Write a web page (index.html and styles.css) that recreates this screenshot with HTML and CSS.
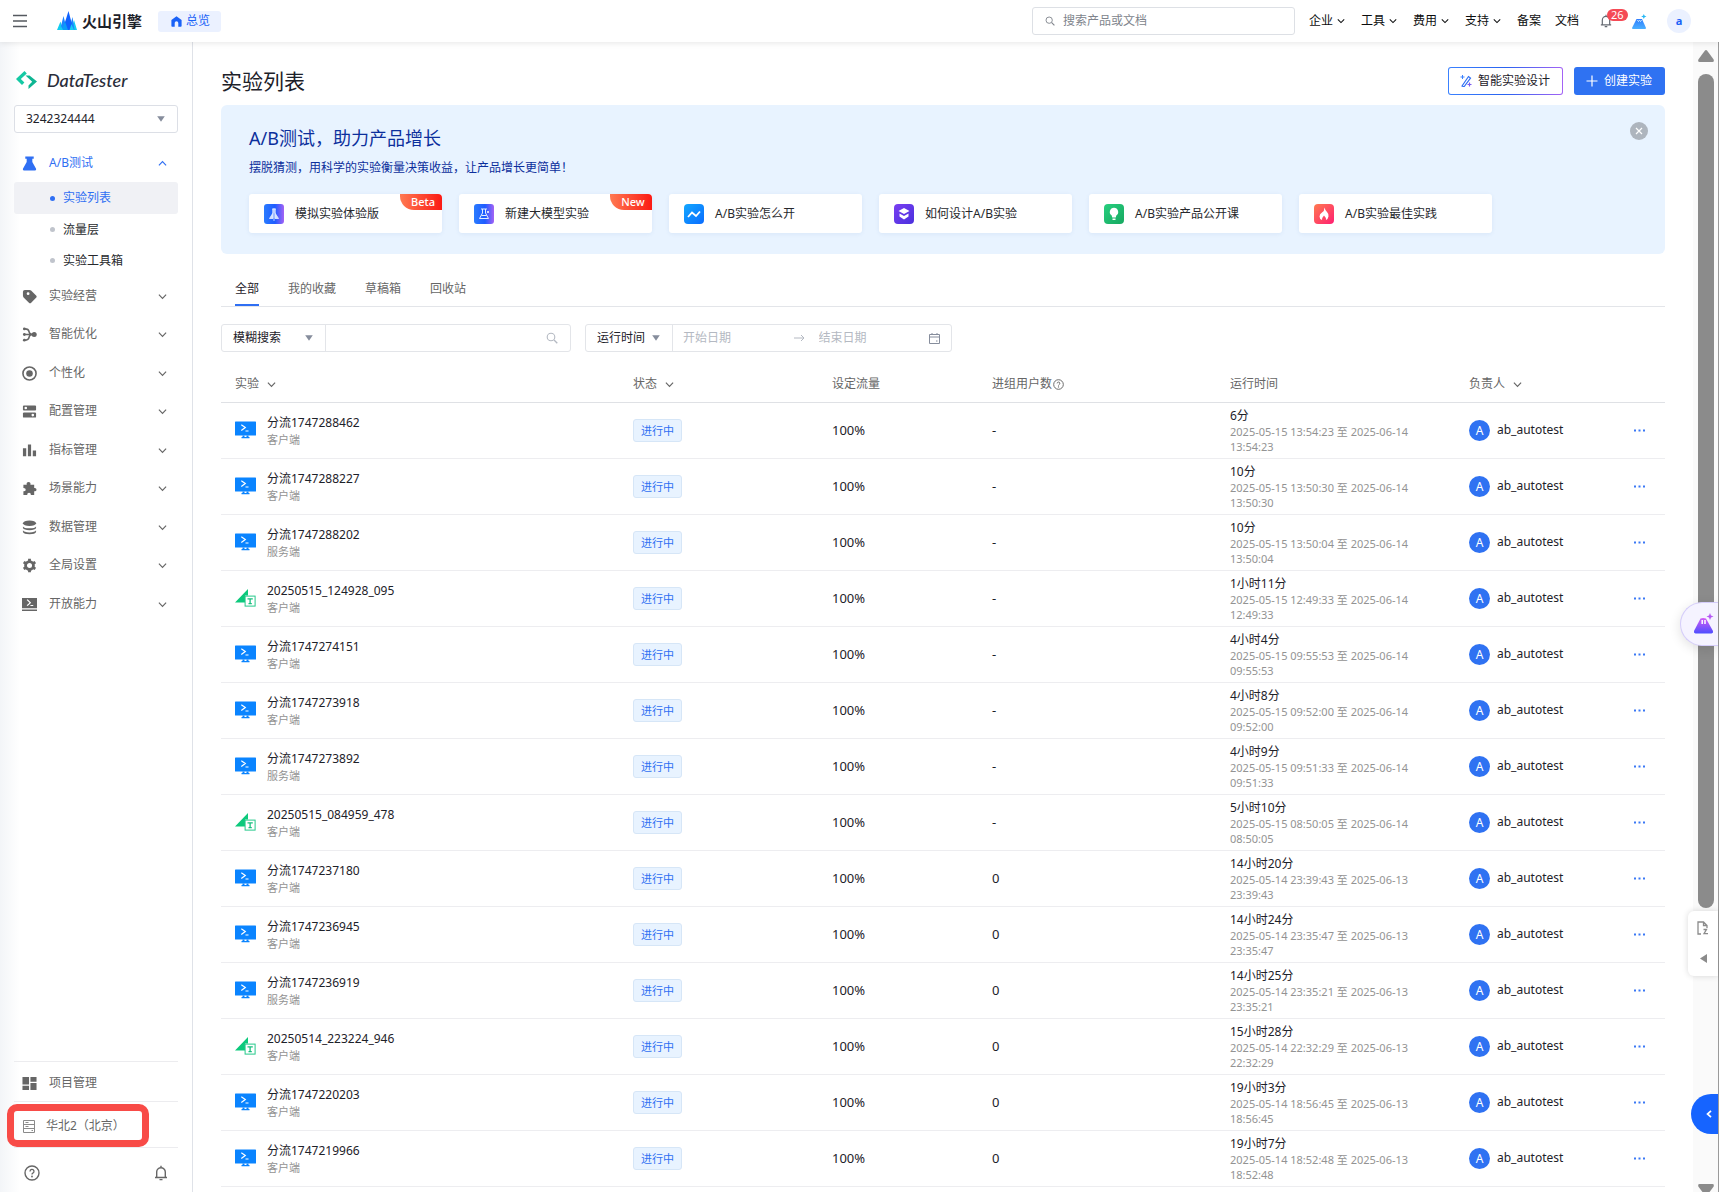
FILE: index.html
```html
<!DOCTYPE html>
<html lang="zh-CN">
<head>
<meta charset="utf-8">
<title>实验列表 - DataTester</title>
<link rel="stylesheet" href="styles.css">
</head>
<body>
<svg class="sprite" aria-hidden="true">
  <defs>
    <linearGradient id="g-lab" x1="0" x2="1"><stop offset="0" stop-color="#2a7bff"/><stop offset=".55" stop-color="#1f5cff"/><stop offset="1" stop-color="#a463f5"/></linearGradient>
    <linearGradient id="g-sky" x1="0" y1="0" x2="1" y2="1"><stop offset="0" stop-color="#12a8ff"/><stop offset="1" stop-color="#0a6cff"/></linearGradient>
    <linearGradient id="g-violet" x1="0" y1="0" x2="1" y2="1"><stop offset="0" stop-color="#7a3ff2"/><stop offset="1" stop-color="#4a30dd"/></linearGradient>
    <linearGradient id="g-green" x1="0" y1="0" x2="1" y2="1"><stop offset="0" stop-color="#27cf7f"/><stop offset="1" stop-color="#17a860"/></linearGradient>
    <linearGradient id="g-fire" x1="0" y1="0" x2="1" y2="1"><stop offset="0" stop-color="#ff7a50"/><stop offset="1" stop-color="#ff1f72"/></linearGradient>
    <linearGradient id="g-ai" x1="0" y1="0" x2="0" y2="1"><stop offset="0" stop-color="#d45cf5"/><stop offset="1" stop-color="#4d4dff"/></linearGradient>
    <linearGradient id="g-hill" x1="0" y1="0" x2="0" y2="1"><stop offset="0" stop-color="#2f7dff"/><stop offset="1" stop-color="#4bb0ff"/></linearGradient>
  </defs>
  <symbol id="down" viewBox="0 0 10 10"><path d="M1 3l4 4 4-4" fill="none" stroke="currentColor" stroke-width="1.3"/></symbol>
  <symbol id="up" viewBox="0 0 10 10"><path d="M1 7l4-4 4 4" fill="none" stroke="currentColor" stroke-width="1.3"/></symbol>
  <symbol id="caret" viewBox="0 0 8 6"><path d="M.2.3h7.600L4 5.800z" fill="currentColor"/></symbol>
  <symbol id="search" viewBox="0 0 12 12"><circle cx="5" cy="5" r="3.8" fill="none" stroke="currentColor" stroke-width="1.1"/><path d="M8 8l3.3 3.3" stroke="currentColor" stroke-width="1.3"/></symbol>
  <symbol id="help" viewBox="0 0 16 16"><circle cx="8" cy="8" r="7" fill="none" stroke="currentColor" stroke-width="1.4"/><path d="M6 6.4a2 2 0 1 1 2.9 1.8c-.6.3-.9.6-.9 1.3" fill="none" stroke="currentColor" stroke-width="1.3"/><circle cx="8" cy="11.5" r=".9" fill="currentColor"/></symbol>
  <symbol id="bell" viewBox="0 0 14 16"><path d="M1 12.5h12M2.700 12.5V7a4.3 4.3 0 0 1 8.600 0v5.500M7 2.700V.8M5.500 14.600h3" fill="none" stroke="currentColor" stroke-width="1.400"/></symbol>
  <symbol id="screen" viewBox="0 0 21 18"><rect width="21" height="14" y=".5" rx=".6" fill="#0a84ff"/><path d="M7.500 14.500h2V16h-2zM11.500 14.500h2V16h-2zM6.500 16h8v1.200h-8z" fill="#0a84ff"/><path d="M6.300 3.800l4 2.700-4 3M10.500 10h3" fill="none" stroke="#fff" stroke-width="1.200"/></symbol>
  <symbol id="tri" viewBox="0 0 21 18"><path d="M0 13.500L13 0v6.500H10v7z" fill="#0cc97c"/><rect x="10.100" y="7.100" width="10" height="10" fill="#fff" stroke="#25c98a"/><path d="M12.500 9.800h5.300M15.100 9.800v5M13.500 14.700h3.300" stroke="#19bf7f" stroke-width="1.300"/></symbol>
  <symbol id="dots" viewBox="0 0 11 3"><path d="M0 .5h2v2H0zM4.500.5h2v2h-2zM9 .5h2v2H9z" fill="#3a78f5"/></symbol>
</svg>

<header class="topbar">
  <button class="icon-btn" aria-label="菜单"><svg width="14" height="14" viewBox="0 0 14 14"><path d="M0 1.500h14M0 7h14M0 12.500h14" stroke="#55595f" stroke-width="1.300"/></svg></button>
  <a class="brand" href="#">
    <svg width="20" height="20" viewBox="0 0 20 20"><path d="M0 19L3.500 10.500 6 19zM20 19L17 9l-3 10z" fill="#12cdf0"/><path d="M3 19L6.500 5l3.500 14zM17.500 19L15.500 6 12 19z" fill="#1a85ff"/><path d="M5.500 19L11.500 0l5 19z" fill="#0f62fe"/><path d="M4.500 19L8 10.500 11 19z" fill="#0a9cf8"/><path d="M12.500 19l2-6 2.500 6zM2 19l2-4 2 4z" fill="#16cdf2"/></svg>
    <span>火山引擎</span>
  </a>
  <a class="overview" href="#"><svg width="11" height="11" viewBox="0 0 11 11"><path d="M5.500.3L10.600 4v6q0 .8-.8.8H7.300V7a1.800 1.800 0 0 0-3.600 0v3.800H1.200Q.4 10.800.4 10V4z" fill="#1a62f7"/></svg>总览</a>
  <label class="site-search"><svg width="10" height="10"><use href="#search"/></svg><input type="text" placeholder="搜索产品或文档" aria-label="搜索产品或文档"></label>
  <nav class="topnav">
    <button>企业<svg width="8" height="8"><use href="#down"/></svg></button>
    <button>工具<svg width="8" height="8"><use href="#down"/></svg></button>
    <button>费用<svg width="8" height="8"><use href="#down"/></svg></button>
    <button>支持<svg width="8" height="8"><use href="#down"/></svg></button>
    <a href="#">备案</a>
    <a href="#">文档</a>
  </nav>
  <button class="icon-btn notice" aria-label="通知"><svg width="12" height="14"><use href="#bell"/></svg><span class="count">26</span></button>
  <button class="icon-btn assistant" aria-label="助手"><svg width="15" height="15" viewBox="0 0 15 15"><path d="M0 14L4.500 5h5.500l4 9q0 1-1 1H1q-1 0-1-1z" fill="url(#g-hill)"/><path d="M5.500 6l1 1.500 1-1 1 1L9.500 6" stroke="#d7f3ff" fill="none"/><path d="M11.800 0l.8 1.700 1.900.8-1.900.8-.8 1.700-.8-1.700-1.900-.8 1.900-.8z" fill="#28b8f5"/></svg></button>
  <button class="user" aria-label="账号">a</button>
</header>

<div class="body">
  <aside class="side">
    <div class="product">
      <svg width="21" height="18" viewBox="0 0 21 18"><path d="M8.500 0L0 8l6 6 2.400-2.400L4.800 8l6-5.500z" fill="#14c9a4"/><path d="M9.500 4.500h4L21 10.500 12.500 18v-3.500l3.700-3.800z" fill="#0eb592"/></svg>
      <span>DataTester</span>
    </div>
    <div class="select project"><select aria-label="项目"><option>3242324444</option></select><svg width="8" height="6"><use href="#caret"/></svg></div>
    <nav class="menu">
      <a class="item active" href="#"><svg class="ico" viewBox="0 0 16 16"><path d="M3.500.5h9V3H11v3.500l4 7q.5 1.800-1 2H2q-1.500-.2-1-2l4-7V3H3.500z" fill="#2f6ff3"/></svg>A/B测试<svg class="arrow"><use href="#up"/></svg></a>
      <ul class="sub">
        <li class="on"><a href="#">实验列表</a></li>
        <li><a href="#">流量层</a></li>
        <li><a href="#">实验工具箱</a></li>
      </ul>
      <ul class="groups">
        <li><a class="item" href="#"><svg class="ico" viewBox="0 0 16 16"><path fill-rule="evenodd" d="M1 3q0-2 2-2l5 0q1 0 1.700.700L15 7q1.300 1.200 0 2.400l-5.200 5.200q-1.200 1.200-2.400 0L1.700 9Q1 8.300 1 7zm5.500 3.500a1.500 1.500 0 1 0 0-3 1.500 1.500 0 0 0 0 3z"/></svg>实验经营<svg class="arrow"><use href="#down"/></svg></a></li>
        <li><a class="item" href="#"><svg class="ico" viewBox="0 0 16 16"><circle cx="13" cy="8" r="2.700"/><circle cx="2.500" cy="8" r="1.500"/><circle cx="2.500" cy="2" r="1.500"/><circle cx="2.500" cy="14" r="1.500"/><path d="M2.500 8H12M3 2q4 0 4.500 3T12 8M3 14q4 0 4.500-3T12 8" fill="none" stroke="#666" stroke-width="1.700"/></svg>智能优化<svg class="arrow"><use href="#down"/></svg></a></li>
        <li><a class="item" href="#"><svg class="ico" viewBox="0 0 16 16"><circle cx="8" cy="8" r="7" fill="none" stroke="#666" stroke-width="1.700"/><circle cx="8" cy="8" r="3.500"/></svg>个性化<svg class="arrow"><use href="#down"/></svg></a></li>
        <li><a class="item" href="#"><svg class="ico" viewBox="0 0 16 16"><path fill-rule="evenodd" d="M2 1.500h12q1 0 1 1v4q0 .5-1 .5H2q-1 0-1-.5v-4q0-1 1-1zm2 4.200a1.400 1.400 0 1 0 0-2.800 1.400 1.400 0 0 0 0 2.800zM2 9h12q1 0 1 .5v4q0 1-1 1H2q-1 0-1-1v-4Q1 9 2 9zm9.500 4.200a1.400 1.400 0 1 0 0-2.800 1.400 1.400 0 0 0 0 2.800z"/></svg>配置管理<svg class="arrow"><use href="#down"/></svg></a></li>
        <li><a class="item" href="#"><svg class="ico" viewBox="0 0 16 16"><path d="M1 5.500h3.500V14H1zM6.300 1.500h3.400V14H6.300zM11.500 8H15v6h-3.500z"/></svg>指标管理<svg class="arrow"><use href="#down"/></svg></a></li>
        <li><a class="item" href="#"><svg class="ico" viewBox="0 0 16 16"><path d="M1.500 4H5q-.5-3 2-3t2 3h4v3.500q2.500-.3 2.500 1.700t-2.500 1.800V15H9.500q0-2.500-2-2.500t-2 2.500h-4v-4q2.500 0 2.500-1.800T1.500 7.500z"/></svg>场景能力<svg class="arrow"><use href="#down"/></svg></a></li>
        <li><a class="item" href="#"><svg class="ico" viewBox="0 0 16 16"><ellipse cx="8" cy="3.500" rx="7" ry="3"/><path d="M1 6.800q1 2 7 2t7-2v1.700q-1 2.300-7 2.300t-7-2.300zM1 11q1 2.200 7 2.200t7-2.200v1.800q-1 2.400-7 2.400t-7-2.400z"/></svg>数据管理<svg class="arrow"><use href="#down"/></svg></a></li>
        <li><a class="item" href="#"><svg class="ico" viewBox="0 0 16 16"><circle cx="8" cy="8" r="4.200" fill="none" stroke="#666" stroke-width="3"/><path d="M6.500.8h3v3h-3zM6.500 12.200h3v3h-3zM1 5.700l1.500-2.600L5 4.600 3.500 7.200zM11 11.400l1.500-2.600 2.500 1.500-1.500 2.600zM1 10.300l2.500-1.500L5 11.400l-2.500 1.500zM11 4.600l2.500-1.500L15 5.700l-2.500 1.500z"/></svg>全局设置<svg class="arrow"><use href="#down"/></svg></a></li>
        <li><a class="item" href="#"><svg class="ico" viewBox="0 0 16 16"><path fill-rule="evenodd" d="M0 1h16v11H0zm5 2.200l3 2.800-3 2.800 1 .9L9.800 6 6 2.300zM9 8.500v1.200h3V8.500zM0 13.300h16v1.500H0z"/></svg>开放能力<svg class="arrow"><use href="#down"/></svg></a></li>
      </ul>
    </nav>
    <div class="side-foot">
      <a class="item" href="#"><svg class="ico" viewBox="0 0 16 16"><path d="M.5 1h7v8h-7zM9 1h6.500v5H9zM9 7.500h6.500V15H9zM.5 10.500h7V15h-7z"/></svg>项目管理</a>
      <a class="item region" href="#"><svg class="ico small" viewBox="0 0 12 13"><path d="M.5.5h11v12H.5zM.5 4.500h11M.5 8.500h11M2.500 2.500h3M2.500 6.500h3M8.500 10.500h1.500" fill="none" stroke="#8a8a8a"/></svg>华北2（北京）</a>
      <div class="tools">
        <button class="icon-btn" aria-label="帮助"><svg width="16" height="16"><use href="#help"/></svg></button>
        <button class="icon-btn" aria-label="消息"><svg width="14" height="16"><use href="#bell"/></svg></button>
      </div>
      <div class="highlight"></div>
    </div>
  </aside>

  <main class="main">
    <div class="head">
      <h1>实验列表</h1>
      <button class="btn smart"><svg width="12" height="12" viewBox="0 0 12 12"><path d="M2 11L8.500 1.500 10.500 3 4 11.800z" stroke="#2f6ff3" stroke-width="1.200" fill="none"/><path d="M2.500 0v4M.5 2h4" stroke="#3b82ff"/><path d="M9.500 7.500v4M7.500 9.500h4" stroke="#7a5cf0" stroke-width="1.200"/></svg>智能实验设计</button>
      <button class="btn primary"><svg width="12" height="12" viewBox="0 0 12 12"><path d="M6 .5v11M.5 6h11" stroke="#fff" stroke-width="1.200"/></svg>创建实验</button>
    </div>

    <section class="banner">
      <h2>A/B测试，助力产品增长</h2>
      <p>摆脱猜测，用科学的实验衡量决策收益，让产品增长更简单！</p>
      <button class="close" aria-label="关闭"><svg width="8" height="8" viewBox="0 0 8 8"><path d="M1 1l6 6M7 1L1 7" stroke="#fff" stroke-width="1.200"/></svg></button>
      <div class="cards">
        <a class="card" href="#"><svg viewBox="0 0 20 20"><rect width="20" height="20" rx="3" fill="url(#g-lab)"/><path d="M8 5h4M9 5v4l-3.500 5.500h3.500zM11 5v4l3.500 5.500H11z" fill="#cfe0ff" stroke="#e4edff" stroke-width=".8"/><path d="M10 4v13" stroke="#fff" stroke-width=".7"/></svg>模拟实验体验版<span class="badge">Beta</span></a>
        <a class="card" href="#"><svg viewBox="0 0 20 20"><rect width="20" height="20" rx="3" fill="url(#g-lab)"/><path d="M7 5h6M8.500 5v4L5.500 14.500h9L11.500 9V5M7.500 11.500h5" fill="none" stroke="#e4edff"/><circle cx="14" cy="8" r="1" fill="#fff"/></svg>新建大模型实验<span class="badge">New</span></a>
        <a class="card" href="#"><svg viewBox="0 0 20 20"><rect width="20" height="20" rx="4" fill="url(#g-sky)"/><path d="M4 13l4-4.500 4 3.500 4-4.500" fill="none" stroke="#fff" stroke-width="1.800"/></svg>A/B实验怎么开</a>
        <a class="card" href="#"><svg viewBox="0 0 20 20"><rect width="20" height="20" rx="4" fill="url(#g-violet)"/><path d="M10 4l5.500 3L10 10 4.500 7zM5.500 9.500L10 12l4.500-2.500v3L10 15.500l-4.500-3z" fill="#fff"/></svg>如何设计A/B实验</a>
        <a class="card" href="#"><svg viewBox="0 0 20 20"><rect width="20" height="20" rx="4" fill="url(#g-green)"/><path d="M10 3.800a4.200 4.200 0 0 1 2.300 7.700l-.5 2H8.200l-.5-2A4.200 4.200 0 0 1 10 3.800zM8.500 14.500h3V16h-3z" fill="#fff"/></svg>A/B实验产品公开课</a>
        <a class="card" href="#"><svg viewBox="0 0 20 20"><rect width="20" height="20" rx="4" fill="url(#g-fire)"/><path d="M10.500 3.500q.5 2.500 2.500 4.500t1.500 4.500-2.500 3.500q.2-2.500-2-4.500-2 2-2 4.500-2.500-1-2.500-3.500T8 8.500t2.500-5z" fill="#fff"/></svg>A/B实验最佳实践</a>
      </div>
    </section>

    <nav class="tabs">
      <a class="on" href="#">全部</a>
      <a href="#">我的收藏</a>
      <a href="#">草稿箱</a>
      <a href="#">回收站</a>
    </nav>

    <div class="filters">
      <div class="combo find">
        <div class="select"><select aria-label="搜索方式"><option>模糊搜索</option></select><svg width="8" height="6"><use href="#caret"/></svg></div>
        <input type="text" aria-label="搜索实验">
        <svg class="muted" width="12" height="12"><use href="#search"/></svg>
      </div>
      <div class="combo range">
        <div class="select"><select aria-label="时间类型"><option>运行时间</option></select><svg width="8" height="6"><use href="#caret"/></svg></div>
        <input type="text" placeholder="开始日期" aria-label="开始日期">
        <svg class="muted to" width="11" height="8" viewBox="0 0 11 8"><path d="M0 4h10M7 1l3 3-3 3" fill="none" stroke="currentColor"/></svg>
        <input type="text" placeholder="结束日期" aria-label="结束日期">
        <svg class="cal" width="11" height="11" viewBox="0 0 11 11"><path d="M.5 1.500h10v9H.5zM.5 4h10M3 0v2M8 0v2M7 8h1.500" fill="none" stroke="currentColor"/></svg>
      </div>
    </div>

    <table class="list">
      <colgroup><col><col class="c-state"><col class="c-flow"><col class="c-users"><col class="c-time"><col class="c-owner"><col class="c-more"></colgroup>
      <thead>
        <tr><th>实验<svg><use href="#down"/></svg></th><th>状态<svg><use href="#down"/></svg></th><th>设定流量</th><th>进组用户数<svg class="q"><use href="#help"/></svg></th><th>运行时间</th><th>负责人<svg><use href="#down"/></svg></th><th></th></tr>
      </thead>
      <tbody>
        <tr><td><div class="exp"><svg><use href="#screen"/></svg><div><a href="#">分流1747288462</a><small>客户端</small></div></div></td><td><span class="tag">进行中</span></td><td class="num">100%</td><td class="num">-</td><td class="time">6分<small>2025-05-15 13:54:23 至 2025-06-14 13:54:23</small></td><td><div class="owner"><i>A</i>ab_autotest</div></td><td class="more"><button aria-label="更多"><svg><use href="#dots"/></svg></button></td></tr>
        <tr><td><div class="exp"><svg><use href="#screen"/></svg><div><a href="#">分流1747288227</a><small>客户端</small></div></div></td><td><span class="tag">进行中</span></td><td class="num">100%</td><td class="num">-</td><td class="time">10分<small>2025-05-15 13:50:30 至 2025-06-14 13:50:30</small></td><td><div class="owner"><i>A</i>ab_autotest</div></td><td class="more"><button aria-label="更多"><svg><use href="#dots"/></svg></button></td></tr>
        <tr><td><div class="exp"><svg><use href="#screen"/></svg><div><a href="#">分流1747288202</a><small>服务端</small></div></div></td><td><span class="tag">进行中</span></td><td class="num">100%</td><td class="num">-</td><td class="time">10分<small>2025-05-15 13:50:04 至 2025-06-14 13:50:04</small></td><td><div class="owner"><i>A</i>ab_autotest</div></td><td class="more"><button aria-label="更多"><svg><use href="#dots"/></svg></button></td></tr>
        <tr><td><div class="exp"><svg><use href="#tri"/></svg><div><a href="#">20250515_124928_095</a><small>客户端</small></div></div></td><td><span class="tag">进行中</span></td><td class="num">100%</td><td class="num">-</td><td class="time">1小时11分<small>2025-05-15 12:49:33 至 2025-06-14 12:49:33</small></td><td><div class="owner"><i>A</i>ab_autotest</div></td><td class="more"><button aria-label="更多"><svg><use href="#dots"/></svg></button></td></tr>
        <tr><td><div class="exp"><svg><use href="#screen"/></svg><div><a href="#">分流1747274151</a><small>客户端</small></div></div></td><td><span class="tag">进行中</span></td><td class="num">100%</td><td class="num">-</td><td class="time">4小时4分<small>2025-05-15 09:55:53 至 2025-06-14 09:55:53</small></td><td><div class="owner"><i>A</i>ab_autotest</div></td><td class="more"><button aria-label="更多"><svg><use href="#dots"/></svg></button></td></tr>
        <tr><td><div class="exp"><svg><use href="#screen"/></svg><div><a href="#">分流1747273918</a><small>客户端</small></div></div></td><td><span class="tag">进行中</span></td><td class="num">100%</td><td class="num">-</td><td class="time">4小时8分<small>2025-05-15 09:52:00 至 2025-06-14 09:52:00</small></td><td><div class="owner"><i>A</i>ab_autotest</div></td><td class="more"><button aria-label="更多"><svg><use href="#dots"/></svg></button></td></tr>
        <tr><td><div class="exp"><svg><use href="#screen"/></svg><div><a href="#">分流1747273892</a><small>服务端</small></div></div></td><td><span class="tag">进行中</span></td><td class="num">100%</td><td class="num">-</td><td class="time">4小时9分<small>2025-05-15 09:51:33 至 2025-06-14 09:51:33</small></td><td><div class="owner"><i>A</i>ab_autotest</div></td><td class="more"><button aria-label="更多"><svg><use href="#dots"/></svg></button></td></tr>
        <tr><td><div class="exp"><svg><use href="#tri"/></svg><div><a href="#">20250515_084959_478</a><small>客户端</small></div></div></td><td><span class="tag">进行中</span></td><td class="num">100%</td><td class="num">-</td><td class="time">5小时10分<small>2025-05-15 08:50:05 至 2025-06-14 08:50:05</small></td><td><div class="owner"><i>A</i>ab_autotest</div></td><td class="more"><button aria-label="更多"><svg><use href="#dots"/></svg></button></td></tr>
        <tr><td><div class="exp"><svg><use href="#screen"/></svg><div><a href="#">分流1747237180</a><small>客户端</small></div></div></td><td><span class="tag">进行中</span></td><td class="num">100%</td><td class="num">0</td><td class="time">14小时20分<small>2025-05-14 23:39:43 至 2025-06-13 23:39:43</small></td><td><div class="owner"><i>A</i>ab_autotest</div></td><td class="more"><button aria-label="更多"><svg><use href="#dots"/></svg></button></td></tr>
        <tr><td><div class="exp"><svg><use href="#screen"/></svg><div><a href="#">分流1747236945</a><small>客户端</small></div></div></td><td><span class="tag">进行中</span></td><td class="num">100%</td><td class="num">0</td><td class="time">14小时24分<small>2025-05-14 23:35:47 至 2025-06-13 23:35:47</small></td><td><div class="owner"><i>A</i>ab_autotest</div></td><td class="more"><button aria-label="更多"><svg><use href="#dots"/></svg></button></td></tr>
        <tr><td><div class="exp"><svg><use href="#screen"/></svg><div><a href="#">分流1747236919</a><small>服务端</small></div></div></td><td><span class="tag">进行中</span></td><td class="num">100%</td><td class="num">0</td><td class="time">14小时25分<small>2025-05-14 23:35:21 至 2025-06-13 23:35:21</small></td><td><div class="owner"><i>A</i>ab_autotest</div></td><td class="more"><button aria-label="更多"><svg><use href="#dots"/></svg></button></td></tr>
        <tr><td><div class="exp"><svg><use href="#tri"/></svg><div><a href="#">20250514_223224_946</a><small>客户端</small></div></div></td><td><span class="tag">进行中</span></td><td class="num">100%</td><td class="num">0</td><td class="time">15小时28分<small>2025-05-14 22:32:29 至 2025-06-13 22:32:29</small></td><td><div class="owner"><i>A</i>ab_autotest</div></td><td class="more"><button aria-label="更多"><svg><use href="#dots"/></svg></button></td></tr>
        <tr><td><div class="exp"><svg><use href="#screen"/></svg><div><a href="#">分流1747220203</a><small>客户端</small></div></div></td><td><span class="tag">进行中</span></td><td class="num">100%</td><td class="num">0</td><td class="time">19小时3分<small>2025-05-14 18:56:45 至 2025-06-13 18:56:45</small></td><td><div class="owner"><i>A</i>ab_autotest</div></td><td class="more"><button aria-label="更多"><svg><use href="#dots"/></svg></button></td></tr>
        <tr><td><div class="exp"><svg><use href="#screen"/></svg><div><a href="#">分流1747219966</a><small>客户端</small></div></div></td><td><span class="tag">进行中</span></td><td class="num">100%</td><td class="num">0</td><td class="time">19小时7分<small>2025-05-14 18:52:48 至 2025-06-13 18:52:48</small></td><td><div class="owner"><i>A</i>ab_autotest</div></td><td class="more"><button aria-label="更多"><svg><use href="#dots"/></svg></button></td></tr>
      </tbody>
    </table>
  </main>

  <div class="scroll" aria-hidden="true">
    <svg width="16" height="12" viewBox="0 0 16 12"><path d="M6.800.8q1.200-1.500 2.400 0l6.300 8.500q1 2.700-1 2.700h-13q-2 0-1-2.700z" fill="#8b8b8b"/></svg>
    <div class="track"><div class="thumb"></div></div>
    <svg width="16" height="12" viewBox="0 0 16 12"><path d="M6.800 11.200q1.200 1.500 2.400 0l6.300-8.500q1-2.700-1-2.700h-13q-2 0-1 2.700z" fill="#8b8b8b"/></svg>
  </div>
</div>

<button class="float ai" aria-label="智能助手"><svg width="22" height="22" viewBox="0 0 22 22"><path d="M7.500 5.500q2.500-1 5.500 0L20 18q.5 2-1.500 2.500h-16Q.5 20 1 18z" fill="url(#g-ai)"/><path d="M9.200 7v4M12 7v4" fill="none" stroke="#fff" stroke-width="1.500"/><path d="M17 0l1 2.500 2.500 1-2.500 1-1 2.500-1-2.500-2.500-1 2.500-1z" fill="#b659f5"/></svg></button>
<div class="float dock">
  <button class="icon-btn" aria-label="文档"><svg width="12" height="14" viewBox="0 0 12 14"><path d="M4 13H1V1h5.500L10 4.500V7M6.500 1v3.500H10M6.500 8.500h3L7 12.700h4" fill="none" stroke="#8b8b8b" stroke-width="1.300"/></svg></button>
  <button class="icon-btn" aria-label="展开"><svg width="7" height="9" viewBox="0 0 7 9"><path d="M7 0v9L0 4.500z" fill="#8b8b8b"/></svg></button>
</div>
<button class="float drawer" aria-label="打开面板"><svg width="6" height="8" viewBox="0 0 6 8"><path d="M5 .8L1.500 4 5 7.200" fill="none" stroke="#fff" stroke-width="1.700"/></svg></button>
</body>
</html>
```
FILE: styles.css
```css
* { box-sizing: border-box; }

body {
  margin: 0;
  height: 100vh;
  display: flex;
  flex-direction: column;
  overflow: hidden;
  background: #fff;
  color: #1d2129;
  font: 12px/18px "Noto Sans", "Noto Sans CJK SC", sans-serif;
}

a { color: inherit; text-decoration: none; }
ul { list-style: none; margin: 0; padding: 0; }
svg { flex: none; }
button, input, select { font: inherit; color: inherit; }
button { border: 0; padding: 0; background: none; display: flex; align-items: center; }
input { border: 0; padding: 0; background: none; outline: 0; min-width: 0; }
.sprite { position: absolute; width: 0; height: 0; }
.icon-btn { justify-content: center; }

/* Top bar */
.topbar {
  flex: none;
  height: 42px;
  display: flex;
  align-items: center;
  padding: 0 28px 0 13px;
  box-shadow: 0 1px 6px rgba(0, 0, 0, .1);
  position: relative;
  z-index: 2;
  background: #fff;
}
.brand { display: flex; align-items: center; gap: 5px; margin-left: 30px; font-size: 15px; font-weight: 600; }
.overview {
  display: flex;
  align-items: center;
  gap: 4px;
  height: 21px;
  margin-left: 16px;
  padding: 0 11px 0 13px;
  border-radius: 3px;
  background: #ebf1ff;
  color: #1a62f7;
}
.site-search {
  display: flex;
  align-items: center;
  gap: 8px;
  width: 263px;
  height: 28px;
  margin-left: auto;
  padding: 0 12px;
  border: 1px solid #dde0e5;
  border-radius: 3px;
  color: #80848c;
}
.site-search input { flex: 1; }
.site-search input::placeholder { color: #80848c; opacity: 1; }
.topnav { display: flex; gap: 14px; margin-left: 14px; color: #0c0d0e; }
.topnav button { gap: 4px; width: 38px; }
.topnav a { line-height: 18px; }
.notice { position: relative; margin-left: 21px; color: #666b73; }
.count {
  position: absolute;
  left: 7px;
  top: -5px;
  height: 12px;
  padding: 0 4px;
  border-radius: 6px;
  background: #f54a55;
  color: #fff;
  font-size: 11px;
  line-height: 12px;
}
.assistant { margin-left: 20px; }
.user {
  justify-content: center;
  width: 24px;
  height: 24px;
  margin-left: 20px;
  border-radius: 50%;
  background: #ebf1ff;
  color: #1a62f7;
  font-size: 11px;
  font-weight: 700;
}

.body { flex: 1; display: flex; min-height: 0; }

/* Sidebar */
.side {
  flex: none;
  width: 193px;
  display: flex;
  flex-direction: column;
  padding: 28px 14px 0;
  border-right: 1px solid #dfe2e8;
  background: linear-gradient(90deg, #f3f5f8, #fff 20px);
}
.product { display: flex; align-items: center; gap: 10px; height: 20px; padding-left: 2px; color: #2a2d3a; font: italic 500 18px/20px Lato, sans-serif; }
.select { position: relative; display: flex; align-items: center; color: #1d2129; }
.select select { appearance: none; border: 0; outline: 0; background: none; width: 100%; height: 100%; padding: 0 20px 0 11px; }
.select svg { position: absolute; right: 12px; color: #868d9c; pointer-events: none; }
.project { height: 28px; margin-top: 15px; border: 1px solid #dcdfe6; border-radius: 3px; background: #fff; }
.menu { margin-top: 11px; }
.item { display: flex; align-items: center; height: 38px; padding: 0 11px 0 8px; color: #666; }
.item.active { color: #2f6ff3; }
.ico { width: 15px; height: 15px; margin-right: 12px; fill: #666; }
.ico.small { width: 12px; height: 13px; margin: 0 11px 0 1px; }
.arrow { width: 9px; height: 9px; margin-left: auto; }
.sub { padding-bottom: 1px; }
.sub a { display: flex; align-items: center; gap: 8px; height: 31px; padding-left: 36px; border-radius: 3px; color: #26282c; }
.sub a::before { content: ""; width: 5px; height: 5px; border-radius: 50%; background: #c0c4cc; }
.sub .on a { height: 32px; background: #f0f1f5; color: #2f6ff3; }
.sub .on a::before { background: #2f6ff3; }
.groups li:nth-child(even) { padding-bottom: 1px; }
.side-foot { position: relative; margin-top: auto; }
.side-foot .item { height: 40px; padding-top: 3px; border-top: 1px solid #ececef; }
.side-foot .region { height: 46px; }
.tools { display: flex; justify-content: space-between; height: 45px; padding: 6px 10px 0; border-top: 1px solid #ececef; color: #666; }
.highlight {
  position: absolute;
  left: -7px;
  top: 43px;
  width: 142px;
  height: 43px;
  border: 7px solid #f84b47;
  border-radius: 10px;
  pointer-events: none;
}

/* Content */
.main { flex: 1; min-width: 0; padding: 24px 28px 0; overflow: hidden; }
.head { display: flex; align-items: center; gap: 11px; height: 30px; }
h1 { flex: 1; margin: 0; font-size: 21px; line-height: 30px; font-weight: 400; }
.btn { gap: 6px; height: 28px; padding: 0 11px; border-radius: 3px; border: 1px solid transparent; }
.smart { width: 115px; background: linear-gradient(#fff, #fff) padding-box, linear-gradient(90deg, #3b82ff, #2a63f0 50%, #a463f5) border-box; }
.primary { width: 91px; background: #2f72f2; color: #fff; }

.banner { position: relative; margin-top: 9px; height: 149px; padding: 21px 28px; border-radius: 6px; background: #e8f3ff; color: #0c2f9c; }
h2 { margin: 0; font-size: 18px; line-height: 24px; font-weight: 400; }
.banner p { margin: 9px 0 0; }
.close { position: absolute; right: 17px; top: 17px; width: 18px; height: 18px; justify-content: center; border-radius: 50%; background: #aeb5be; }
.cards { display: flex; gap: 17px; margin-top: 17px; }
.card {
  position: relative;
  display: flex;
  align-items: center;
  gap: 11px;
  width: 193px;
  height: 39px;
  padding: 1px 0 0 15px;
  border-radius: 3px;
  background: #fff;
  box-shadow: 0 1px 4px rgba(40, 90, 160, .08);
  color: #26282c;
}
.card svg { width: 20px; height: 20px; }
.badge {
  position: absolute;
  top: 0;
  right: 0;
  width: 42px;
  height: 16px;
  padding-left: 4px;
  border-radius: 0 4px 0 14px;
  background: linear-gradient(90deg, #ff7a52, #fb1a14);
  color: #fff;
  font-size: 11px;
  font-weight: 500;
  line-height: 16px;
  text-align: center;
}

.tabs { display: flex; gap: 29px; height: 53px; padding: 0 14px; border-bottom: 1px solid #e3e5e9; color: #666; }
.tabs a { display: flex; align-items: center; padding-top: 19px; border-bottom: 2px solid transparent; }
.tabs .on { color: #1d2129; border-color: #2f6ff3; }

.filters { display: flex; gap: 14px; margin-top: 17px; }
.combo { display: flex; align-items: center; height: 28px; border: 1px solid #e3e5e9; border-radius: 3px; }
.combo .select { height: 100%; border-right: 1px solid #e3e5e9; }
.combo input { flex: 1; }
.combo input::placeholder { color: #b4b9c2; opacity: 1; }
.find { width: 350px; padding-right: 12px; }
.find .select { width: 104px; }
.find input { padding: 0 10px; }
.range { width: 367px; gap: 10px; padding-right: 11px; }
.range .select { width: 87px; }
.muted { color: #b4b9c2; }
.to { margin-right: 4px; }
.cal { color: #868d9c; }

/* Experiment table */
.list { width: 100%; margin-top: 11px; table-layout: fixed; border-collapse: collapse; }
.c-state { width: 199px; }
.c-flow { width: 160px; }
.c-users { width: 238px; }
.c-time { width: 239px; }
.c-owner { width: 158px; }
.c-more { width: 52px; }
th, td { padding: 0 14px; text-align: left; vertical-align: middle; font-weight: 400; }
th { height: 39px; padding-top: 4px; border-bottom: 1px solid #dfe1e5; color: #666; }
th svg { width: 9px; height: 9px; margin-left: 8px; vertical-align: -1px; }
th .q { width: 11px; height: 11px; margin-left: 1px; vertical-align: -2px; }
td { height: 56px; border-bottom: 1px solid #ededf0; }
.exp { display: flex; align-items: center; gap: 11px; }
.exp svg { width: 21px; height: 18px; }
.exp a, small { display: block; }
small { color: #939393; font-size: 11px; line-height: 15px; }
.tag { display: inline-block; padding: 2px 7px; border: 1px solid #d6e6f7; border-radius: 3px; background: #e8f3ff; color: #2f6ff3; font-size: 11px; line-height: 17px; }
.num { font-size: 13px; }
.time { line-height: 17px; }
.owner { display: flex; align-items: center; gap: 7px; }
.owner i { width: 21px; height: 21px; border-radius: 50%; background: #2f72f2; color: #fff; font-style: normal; line-height: 21px; text-align: center; }
.more { padding: 0; }
.more button { margin: 0 auto; }
.more svg { width: 11px; height: 3px; }

/* Scroll rail */
.scroll { flex: none; width: 26px; display: flex; flex-direction: column; align-items: center; gap: 12px; padding: 8px 4px 0 5px; border-right: 1px solid #9a9a9a; background: #fafafa; }
.scroll svg:last-child { margin-bottom: -4px; }
.track { flex: 1; width: 16px; }
.thumb { height: 76%; border-radius: 8px; background: #8b8b8b; }

/* Floating controls on the right edge */
.float { position: absolute; right: 1px; z-index: 3; }
.ai { top: 602px; width: 38px; height: 44px; padding-left: 12px; border: 1px solid #d5cdfa; border-right: 0; border-radius: 22px 0 0 22px; background: #f5f3ff; box-shadow: 0 3px 12px rgba(0, 0, 0, .12); }
.dock { top: 911px; width: 30px; height: 65px; padding-bottom: 3px; display: flex; flex-direction: column; align-items: center; justify-content: space-around; border-radius: 6px 0 0 6px; background: #fff; box-shadow: 0 0 6px rgba(0, 0, 0, .15); }
.drawer { top: 1094px; width: 27px; height: 40px; padding-left: 15px; border-radius: 20px 0 0 20px; background: #1664ff; }
```
